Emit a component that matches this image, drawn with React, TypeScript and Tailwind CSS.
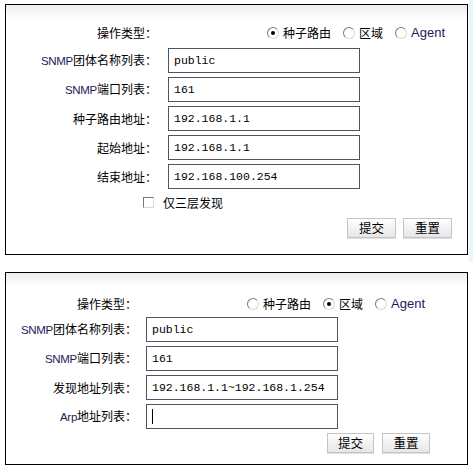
import React from 'react'

const cjk = "[font-family:'Noto_Sans_CJK_SC',sans-serif]"
const latin = "[font-family:'Liberation_Sans',sans-serif] text-[11.5px] tracking-[-0.3px]"

function Radio({ checked, label }: { checked?: boolean; label: React.ReactNode }) {
  return (
    <div className="flex items-center gap-[4px]">
      <span className="flex h-[12px] w-[12px] items-center justify-center rounded-full border border-t-[#7a7a7a] border-l-[#7a7a7a] border-r-[#d8d8d8] border-b-[#d8d8d8] bg-white">
        {checked && <span className="h-[4px] w-[4px] rounded-full bg-black" />}
      </span>
      <span className="text-[12px] leading-none text-black">{label}</span>
    </div>
  )
}

function TypeRow({ labelW, active }: { labelW: string; active: number }) {
  return (
    <div className="flex h-[17px] items-center">
      <div className={`${labelW} text-right text-[12px] leading-none`}>操作类型：</div>
      <div className="ml-[110px] flex items-center gap-[12px]">
        <Radio checked={active === 0} label="种子路由" />
        <Radio checked={active === 1} label="区域" />
        <Radio checked={active === 2} label={<span className="[font-family:'Liberation_Sans',sans-serif] text-[13px] text-[#1a1a5a]">Agent</span>} />
      </div>
    </div>
  )
}

function Field({ labelW, gap, pre, label, value, caret }: { labelW: string; gap: string; pre?: string; label: string; value?: string; caret?: boolean }) {
  return (
    <div className={`flex items-center ${gap}`}>
      <div className={`${labelW} text-right text-[12px] leading-none`}>
        {pre && <span className={`${latin} text-[#1a1a5a]`}>{pre}</span>}
        {label}
      </div>
      <div className="flex h-[25px] w-[192px] items-center border border-[#4e5560] bg-white pl-[5px] [font-family:'Liberation_Mono',monospace] text-[11.5px] text-black">
        {caret ? <span className="h-[15px] w-px bg-black" /> : value}
      </div>
    </div>
  )
}

function Btn({ children, w }: { children: React.ReactNode; w: string }) {
  return (
    <button className={`${w} h-[20px] border border-[#c4c4c4] bg-[linear-gradient(to_bottom,#ffffff,#e6e6e6)] text-[12.5px] leading-none text-black shadow-[0_1px_0_#e0e0e0]`}>
      {children}
    </button>
  )
}

export default function App() {
  return (
    <div className={`flex h-[472px] w-[473px] bg-white ${cjk} text-black`}>
      <div className="ml-[5px] flex w-[463px] flex-col pt-[4px]">
        {/* 种子路由 */}
        <div className="flex h-[251px] flex-col border border-black bg-[linear-gradient(to_bottom,#ededed,#ffffff_14px)] pt-[19px]">
          <TypeRow labelW="w-[151px]" active={0} />
          <div className="mt-[7px] flex flex-col gap-[4px]">
            <Field labelW="w-[151px]" gap="gap-[11px]" pre="SNMP" label="团体名称列表：" value="public" />
            <Field labelW="w-[151px]" gap="gap-[11px]" pre="SNMP" label="端口列表：" value="161" />
            <Field labelW="w-[151px]" gap="gap-[11px]" label="种子路由地址：" value="192.168.1.1" />
            <Field labelW="w-[151px]" gap="gap-[11px]" label="起始地址：" value="192.168.1.1" />
            <Field labelW="w-[151px]" gap="gap-[11px]" label="结束地址：" value="192.168.100.254" />
          </div>
          <div className="ml-[137px] mt-[7px] flex h-[13px] items-center gap-[9px]">
            <span className="h-[11px] w-[11px] border border-t-[#7a7a7a] border-l-[#7a7a7a] border-r-[#d8d8d8] border-b-[#d8d8d8] bg-white" />
            <span className="text-[12px] leading-none">仅三层发现</span>
          </div>
          <div className="mt-[9px] flex justify-end gap-[7px] pr-[15px]">
            <Btn w="w-[49px]">提交</Btn>
            <Btn w="w-[49px]">重置</Btn>
          </div>
        </div>

        {/* 区域 */}
        <div className="mt-[17px] flex h-[193px] flex-col border border-black bg-[linear-gradient(to_bottom,#ededed,#ffffff_14px)] pt-[22px]">
          <TypeRow labelW="w-[131px]" active={1} />
          <div className="mt-[5px] flex flex-col gap-[4px]">
            <Field labelW="w-[131px]" gap="gap-[9px]" pre="SNMP" label="团体名称列表：" value="public" />
            <Field labelW="w-[131px]" gap="gap-[9px]" pre="SNMP" label="端口列表：" value="161" />
            <Field labelW="w-[131px]" gap="gap-[9px]" label="发现地址列表：" value="192.168.1.1~192.168.1.254" />
            <Field labelW="w-[131px]" gap="gap-[9px]" pre="Arp" label="地址列表：" caret />
          </div>
          <div className="mt-[4px] flex justify-end gap-[8px] pr-[37px]">
            <Btn w="w-[47px]">提交</Btn>
            <Btn w="w-[48px]">重置</Btn>
          </div>
        </div>
      </div>
      <div className="ml-[1px] h-[262px] w-[4px] bg-[#eaf4fb]" />
    </div>
  )
}
